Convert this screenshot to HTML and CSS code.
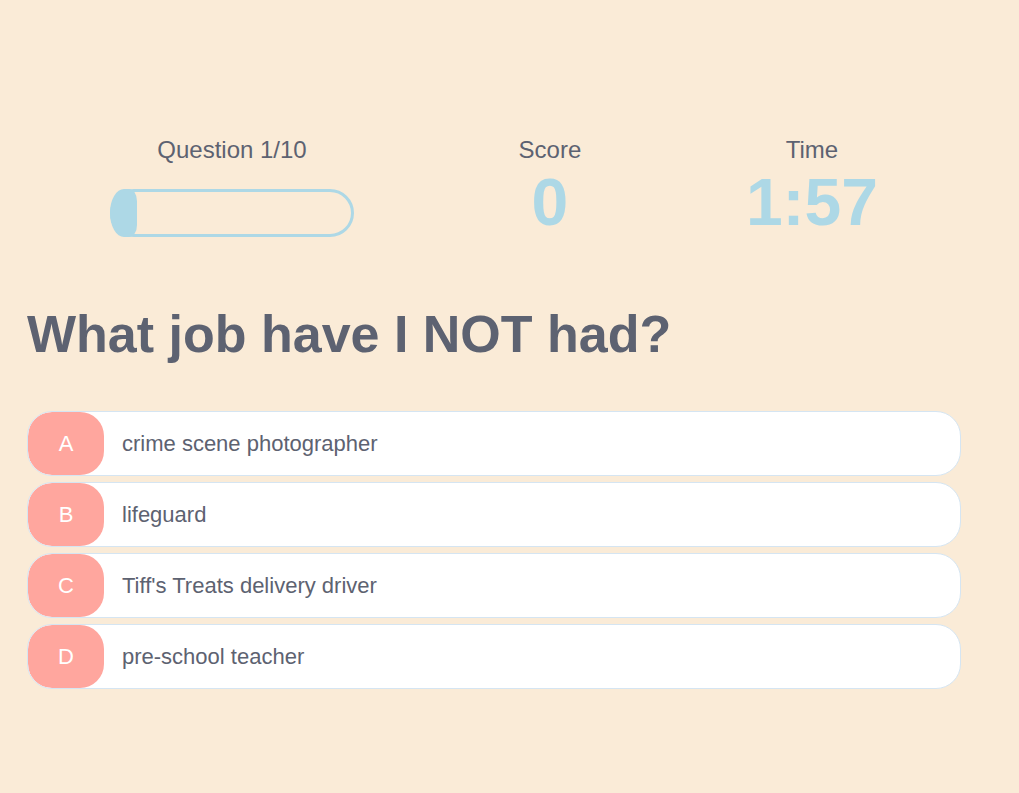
FILE: index.html
```html
<!DOCTYPE html>
<html lang="en">
<head>
<meta charset="utf-8">
<title>Quiz</title>
<link rel="stylesheet" href="styles.css">
</head>
<body>
<div class="container">
  <div class="hud">
    <div class="hud-item">
      <p class="hud-prefix">Question 1/10</p>
      <div class="progress-bar">
        <div class="progress-fill"></div>
      </div>
    </div>
    <div class="hud-item">
      <p class="hud-prefix">Score</p>
      <h2 class="hud-main">0</h2>
    </div>
    <div class="hud-item">
      <p class="hud-prefix">Time</p>
      <h2 class="hud-main">1:57</h2>
    </div>
  </div>
  <h1 class="question">What job have I NOT had?</h1>
  <div class="choices">
    <div class="choice"><p class="choice-prefix">A</p><p class="choice-text">crime scene photographer</p></div>
    <div class="choice"><p class="choice-prefix">B</p><p class="choice-text">lifeguard</p></div>
    <div class="choice"><p class="choice-prefix">C</p><p class="choice-text">Tiff's Treats delivery driver</p></div>
    <div class="choice"><p class="choice-prefix">D</p><p class="choice-text">pre-school teacher</p></div>
  </div>
</div>
</body>
</html>
```

FILE: styles.css
```css
* {
  box-sizing: border-box;
  margin: 0;
  padding: 0;
}
html, body {
  background: #faebd7;
}
body {
  font-family: "Liberation Sans", Arial, sans-serif;
  color: #5d6271;
}
.container {
  width: 934px;
  margin-left: 27px;
  padding-top: 136px;
}
.hud {
  display: flex;
  justify-content: space-between;
  padding: 0 83px;
}
.hud-item {
  display: flex;
  flex-direction: column;
  align-items: center;
}
.hud-prefix {
  font-size: 24px;
  line-height: 27px;
  text-align: center;
}
.hud-main {
  font-size: 66px;
  line-height: 74px;
  font-weight: bold;
  color: #add8e6;
  margin-top: 2px;
}
.progress-bar {
  position: relative;
  width: 244px;
  height: 48px;
  margin-top: 26px;
  border: 3px solid #add8e6;
  border-radius: 24px;
}
.progress-fill {
  position: absolute;
  left: -3px;
  top: -3px;
  bottom: -3px;
  width: 27px;
  background: #add8e6;
  border-radius: 14px 8px 8px 14px / 24px 12px 12px 24px;
}
.question {
  font-size: 52px;
  line-height: 60px;
  font-weight: bold;
  margin-top: 65px;
  margin-bottom: 47px;
}
.choices {
  display: flex;
  flex-direction: column;
  gap: 6px;
}
.choice {
  display: flex;
  align-items: stretch;
  height: 65px;
  background: #fff;
  border: 1px solid #d5e5f2;
  border-radius: 25px;
  overflow: hidden;
}
.choice-prefix {
  width: 76px;
  flex: none;
  display: flex;
  align-items: center;
  justify-content: center;
  background: #ffa69e;
  color: #fff;
  font-size: 22px;
  border-radius: 24px;
}
.choice-text {
  display: flex;
  align-items: center;
  padding-left: 18px;
  font-size: 22px;
}
```
